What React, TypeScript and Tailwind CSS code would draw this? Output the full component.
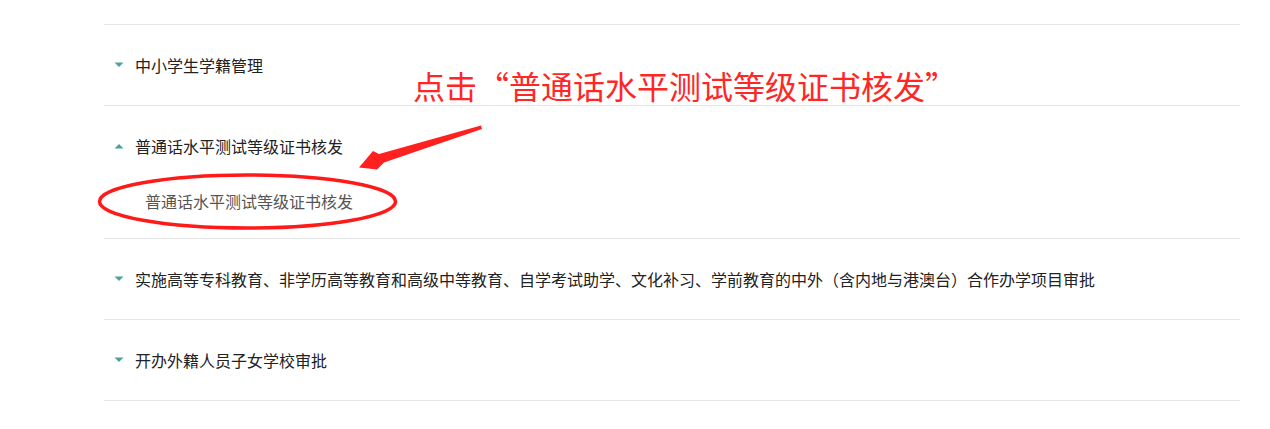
import React from 'react';

const items = [
  { title: '中小学生学籍管理', open: false, children: [] as string[] },
  { title: '普通话水平测试等级证书核发', open: true, children: ['普通话水平测试等级证书核发'] },
  {
    title:
      '实施高等专科教育、非学历高等教育和高级中等教育、自学考试助学、文化补习、学前教育的中外（含内地与港澳台）合作办学项目审批',
    open: false,
    children: [] as string[],
  },
  { title: '开办外籍人员子女学校审批', open: false, children: [] as string[] },
];

function Caret({ open }: { open: boolean }) {
  return (
    <svg className="w-[10px] h-[6px] mr-[11px] shrink-0" viewBox="0 0 10 6">
      {open ? <path d="M0.5 5.5L5 1L9.5 5.5Z" fill="#4f9f9b" /> : <path d="M0.5 0.5L9.5 0.5L5 5Z" fill="#4f9f9b" />}
    </svg>
  );
}

export default function App() {
  return (
    <div
      className="relative w-[1270px] h-[429px] bg-white pt-[24px] overflow-hidden"
      style={{ fontFamily: '"Microsoft YaHei", "Noto Sans CJK SC", sans-serif' }}
    >
      {/* Catalogue list */}
      <div className="ml-[104px] w-[1136px] border-t border-[#e6e6e6]">
        {items.map((item) => (
          <div key={item.title} className={`border-b border-[#e6e6e6] ${item.children.length ? 'pb-[22px]' : ''}`}>
            <div className="h-[80px] flex items-center pl-[10px] pb-[1px] text-[16px] text-[#222]">
              <Caret open={item.open} />
              <span>{item.title}</span>
            </div>
            {item.open &&
              item.children.map((c) => (
                <div key={c} className="h-[30px] flex items-center pl-[41px] text-[16px] text-[#555]">
                  {c}
                </div>
              ))}
          </div>
        ))}
      </div>

      {/* Annotation overlay */}
      <div className="absolute left-[413px] top-[63px] text-[32px] leading-[44px] text-[#ff2626] whitespace-nowrap">
        点击“普通话水平测试等级证书核发”
      </div>
      <svg className="absolute left-0 top-0 pointer-events-none" width="1270" height="429" viewBox="0 0 1270 429">
        <path d="M481 125.5 L379 154 L373 151 L359 167.5 L377 169.5 L384 162.5 L482 129 Z" fill="#ff2020" />
        <ellipse cx="247.5" cy="201.5" rx="148" ry="26.5" fill="none" stroke="#ff1a1a" strokeWidth="3.5" />
      </svg>
    </div>
  );
}
